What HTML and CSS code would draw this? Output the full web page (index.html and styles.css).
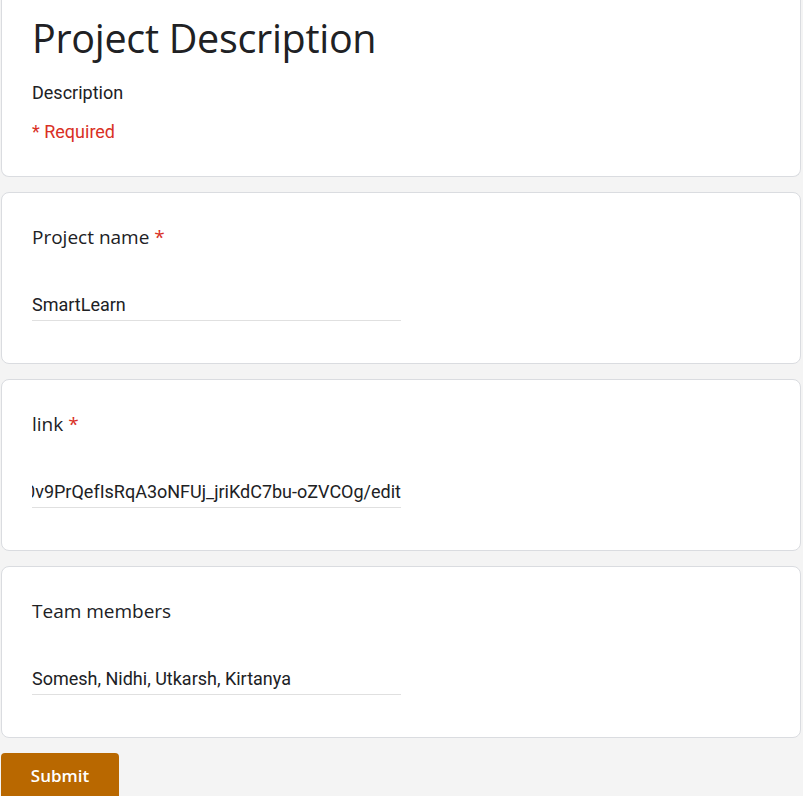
FILE: index.html
```html
<!DOCTYPE html>
<html lang="en">
<head>
<meta charset="utf-8">
<title>Project Description</title>
<link rel="stylesheet" href="styles.css">
</head>
<body>
<main class="form">
  <section class="card card-header">
    <h1 class="form-title">Project Description</h1>
    <p class="form-desc">Description</p>
    <p class="required-note">* Required</p>
  </section>

  <section class="card question">
    <div class="q-title">Project name <span class="star">*</span></div>
    <div class="answer"><span class="answer-text">SmartLearn</span></div>
  </section>

  <section class="card question">
    <div class="q-title">link <span class="star">*</span></div>
    <div class="answer answer-scrolled"><span class="answer-text">https://docs.google.com/document/d/1mK8ZtD0v9PrQefIsRqA3oNFUj_jriKdC7bu-oZVCOg/edit</span></div>
  </section>

  <section class="card question">
    <div class="q-title">Team members</div>
    <div class="answer"><span class="answer-text">Somesh, Nidhi, Utkarsh, Kirtanya</span></div>
  </section>

  <div class="actions">
    <button class="submit" type="button">Submit</button>
  </div>
</main>
</body>
</html>
```

FILE: styles.css
```css
html, body {
  margin: 0;
  padding: 0;
  background: #f4f4f4;
}

body {
  font-family: Roboto, "Liberation Sans", Arial, sans-serif;
  color: #202124;
}

.form {
  width: 800px;
  padding-left: 1px;
  display: flex;
  flex-direction: column;
  gap: 15px;
}

.card {
  background: #fff;
  border: 1px solid #dadce0;
  border-radius: 8px;
  padding: 0 30px;
}

.card-header {
  border-top: none;
  border-radius: 0 0 8px 8px;
  padding-top: 14px;
  padding-bottom: 32px;
}

.form-title {
  margin: 0;
  font-family: "Open Sans", Lato, sans-serif;
  font-weight: 400;
  font-size: 39.5px;
  line-height: 48px;
  letter-spacing: -0.3px;
  color: #202124;
}

.form-desc {
  margin: 19px 0 0;
  font-size: 18px;
  line-height: 24px;
}

.required-note {
  margin: 15px 0 0;
  font-size: 18px;
  line-height: 24px;
  color: #d93025;
}

.question {
  padding-top: 32px;
  padding-bottom: 42px;
}

.q-title {
  font-family: "Open Sans", Lato, sans-serif;
  font-size: 19px;
  line-height: 24px;
  color: #202124;
}

.star {
  color: #d93025;
}

.answer {
  margin-top: 44px;
  width: 369px;
  border-bottom: 1px solid #e0e0e0;
  padding-bottom: 3px;
  font-size: 18px;
  line-height: 24px;
  white-space: nowrap;
  overflow: hidden;
  display: flex;
}

.answer-scrolled {
  justify-content: flex-end;
}

.answer-text {
  flex: none;
}

.actions {
  display: flex;
}

.submit {
  width: 118px;
  height: 48px;
  border: none;
  border-radius: 4px;
  background: #b96800;
  color: #fff;
  font-family: "Open Sans", Lato, sans-serif;
  font-weight: 600;
  font-size: 17px;
  padding: 0 0 4px;
  cursor: pointer;
}
```
